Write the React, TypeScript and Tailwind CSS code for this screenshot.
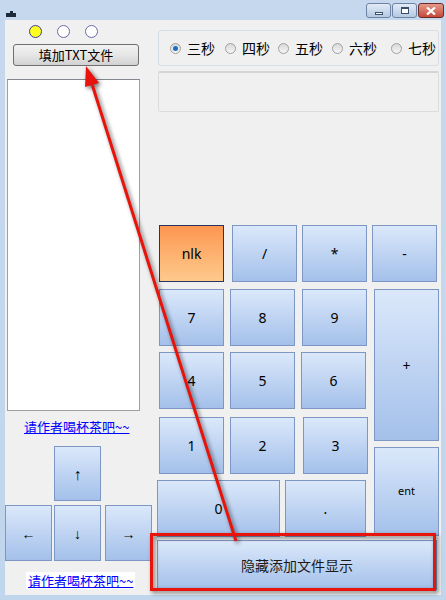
import React from 'react'

const cjk = "font-['Microsoft_YaHei','Noto_Sans_CJK_SC',sans-serif]"

function Key({ label, className = '', orange = false, small = false }: { label: string; className?: string; orange?: boolean; small?: boolean }) {
  return (
    <div
      className={`flex items-center justify-center border font-['Noto_Sans',sans-serif] text-black ${
        small ? 'text-[11px]' : 'text-[14px]'
      } ${
        orange
          ? 'border-[#28365f] bg-gradient-to-b from-[#fc9650] to-[#fdca8c]'
          : 'border-[#7d97c4] bg-gradient-to-b from-[#dbe8fa] to-[#a4c0ea]'
      } ${className}`}
    >
      {label}
    </div>
  )
}

function SecRadio({ label, checked = false, className = '' }: { label: string; checked?: boolean; className?: string }) {
  return (
    <div className={`flex items-center gap-[6px] ${className}`}>
      <span className="flex h-[11px] w-[11px] items-center justify-center rounded-full border border-[#a0a0a0] bg-gradient-to-b from-[#d8d8d8] to-[#f6f6f6]">
        {checked && <span className="h-[5px] w-[5px] rounded-full bg-[#1b6fc2]" />}
      </span>
      <span className={`${cjk} text-[14px] leading-none text-black`}>{label}</span>
    </div>
  )
}

export default function App() {
  return (
    <div className="relative flex h-[600px] w-[446px] flex-col overflow-hidden bg-gradient-to-b from-[#c6d8ee] to-[#c0d6ec]">
      {/* Title bar */}
      <div className="flex h-[20px] items-start">
        <svg width="10" height="6" viewBox="0 0 10 6" className="ml-[6px] mt-[11px]">
          <path d="M0 2h4V0h3v2h3v4H0z" fill="#1c2a3c" />
        </svg>
        <div className="ml-auto mr-[2px] mt-[3px] flex gap-px">
          <div className="flex h-[15px] w-[25px] items-center justify-center rounded-[3px] border border-[#6d83a3] bg-gradient-to-b from-[#e2ebf6] to-[#b5c9e2]">
            <span className="mt-[5px] h-[3px] w-[8px] border border-[#3b4f6b] bg-white" />
          </div>
          <div className="flex h-[15px] w-[25px] items-center justify-center rounded-[3px] border border-[#6d83a3] bg-gradient-to-b from-[#e2ebf6] to-[#b5c9e2]">
            <span className="h-[7px] w-[8px] border border-[#3b4f6b] border-t-2 bg-white" />
          </div>
          <div className="flex h-[15px] w-[26px] items-center justify-center rounded-[3px] border border-[#6e2a24] bg-gradient-to-b from-[#e39a8c] to-[#c5483a]">
            <svg width="10" height="8" viewBox="0 0 10 8">
              <path d="M1 0.5l8 7M9 0.5l-8 7" stroke="#fff" strokeWidth="2.2" />
            </svg>
          </div>
        </div>
      </div>

      {/* Client area */}
      <div className="mx-[5px] flex h-[575px] bg-[#f0f0f0]">
        {/* Left panel */}
        <div className="flex w-[150px] flex-col">
          <div className="flex gap-[15px] pl-[24px] pt-[5px]">
            <span className="h-[13px] w-[13px] rounded-full border border-[#3c3c9a] bg-[#ffff20]" />
            <span className="h-[13px] w-[13px] rounded-full border border-[#6a6aa8] bg-white" />
            <span className="h-[13px] w-[13px] rounded-full border border-[#6a6aa8] bg-white" />
          </div>
          <div
            className={`ml-[8px] mt-[6px] flex h-[22px] w-[126px] items-center justify-center rounded-[3px] border border-[#707070] bg-gradient-to-b from-[#f2f2f2] via-[#e6e6e6] to-[#d2d2d2] ${cjk} text-[13px] text-black`}
          >
            填加TXT文件
          </div>
          <div className="ml-[2px] mt-[13px] h-[332px] w-[133px] border border-[#a0a0a0] border-t-[#828790] bg-white" />
          <a className={`ml-[19px] mt-[8px] ${cjk} text-[13px] leading-[16px] text-[#0000ff] underline`}>请作者喝杯茶吧~~</a>
          <div className="mt-[11px] flex flex-col">
            <Key label="↑" className="ml-[49px] h-[55px] w-[47px] text-[16px]" />
            <div className="mt-[4px] flex">
              <Key label="←" className="h-[56px] w-[47px]" />
              <Key label="↓" className="ml-[2px] h-[56px] w-[47px]" />
              <Key label="→" className="ml-[4px] h-[56px] w-[47px]" />
            </div>
          </div>
          <a className={`ml-[21px] mt-[11px] w-fit bg-white px-[2px] ${cjk} text-[13px] leading-[17px] text-[#0000ff] underline`}>
            请作者喝杯茶吧~~
          </a>
        </div>

        {/* Right panel */}
        <div className="flex flex-1 flex-col">
          <div className="ml-[3px] mt-[10px] flex h-[36px] w-[281px] items-center rounded-[3px] border border-[#d5dfe5] pl-[11px]">
            <SecRadio label="三秒" checked className="w-[55px]" />
            <SecRadio label="四秒" className="w-[53px]" />
            <SecRadio label="五秒" className="w-[54px]" />
            <SecRadio label="六秒" className="w-[59px]" />
            <SecRadio label="七秒" />
          </div>
          <div className="ml-[3px] mt-[5px] h-[41px] w-[281px] rounded-[2px] border border-[#dcdcdc] border-t-2 border-t-[#d4d4d4]" />

          {/* Keypad */}
          <div className="ml-[4px] mt-[113px] flex flex-col">
            <div className="flex">
              <Key label="nlk" orange className="h-[57px] w-[65px]" />
              <Key label="/" className="ml-[8px] h-[57px] w-[65px]" />
              <Key label="*" className="ml-[5px] h-[57px] w-[65px]" />
              <Key label="-" className="ml-[5px] h-[57px] w-[65px]" />
            </div>
            <div className="mt-[7px] flex">
              <div className="flex flex-col gap-[6px]">
                <div className="flex gap-[6px]">
                  <Key label="7" className="h-[57px] w-[65px]" />
                  <Key label="8" className="h-[57px] w-[65px]" />
                  <Key label="9" className="ml-[1px] h-[57px] w-[65px]" />
                </div>
                <div className="flex gap-[6px]">
                  <Key label="4" className="h-[57px] w-[65px]" />
                  <Key label="5" className="h-[57px] w-[65px]" />
                  <Key label="6" className="h-[57px] w-[65px]" />
                </div>
                <div className="mt-[2px] flex gap-[6px]">
                  <Key label="1" className="h-[57px] w-[65px]" />
                  <Key label="2" className="h-[57px] w-[65px]" />
                  <Key label="3" className="ml-[2px] h-[57px] w-[65px]" />
                </div>
                <div className="-ml-[2px] flex gap-[5px]">
                  <Key label="0" className="h-[57px] w-[123px]" />
                  <Key label="." className="h-[57px] w-[81px]" />
                </div>
              </div>
              <div className="ml-[6px] flex flex-col gap-[6px]">
                <Key label="+" className="h-[152px] w-[65px]" />
                <Key label="ent" small className="h-[89px] w-[65px]" />
              </div>
            </div>
            <div
              className={`-ml-[2px] mt-[3px] flex h-[50px] w-[280px] items-center justify-center border border-[#7d97c4] bg-gradient-to-b from-[#dbe8fa] to-[#a4c0ea] ${cjk} text-[14px] text-[#1a1a1a]`}
            >
              隐藏添加文件显示
            </div>
          </div>
        </div>
      </div>

      {/* Red annotation overlay */}
      <svg
        className="pointer-events-none absolute inset-0 drop-shadow-[2px_2px_2px_rgba(0,0,0,0.55)]"
        width="446"
        height="600"
        viewBox="0 0 446 600"
      >
        <line x1="236" y1="541" x2="92" y2="84" stroke="#e8140c" strokeWidth="3" />
        <polygon points="86,66 99,83 85,87" fill="#e8140c" />
        <rect x="151.5" y="534.5" width="283" height="55" fill="none" stroke="#e8140c" strokeWidth="3" />
      </svg>
    </div>
  )
}
